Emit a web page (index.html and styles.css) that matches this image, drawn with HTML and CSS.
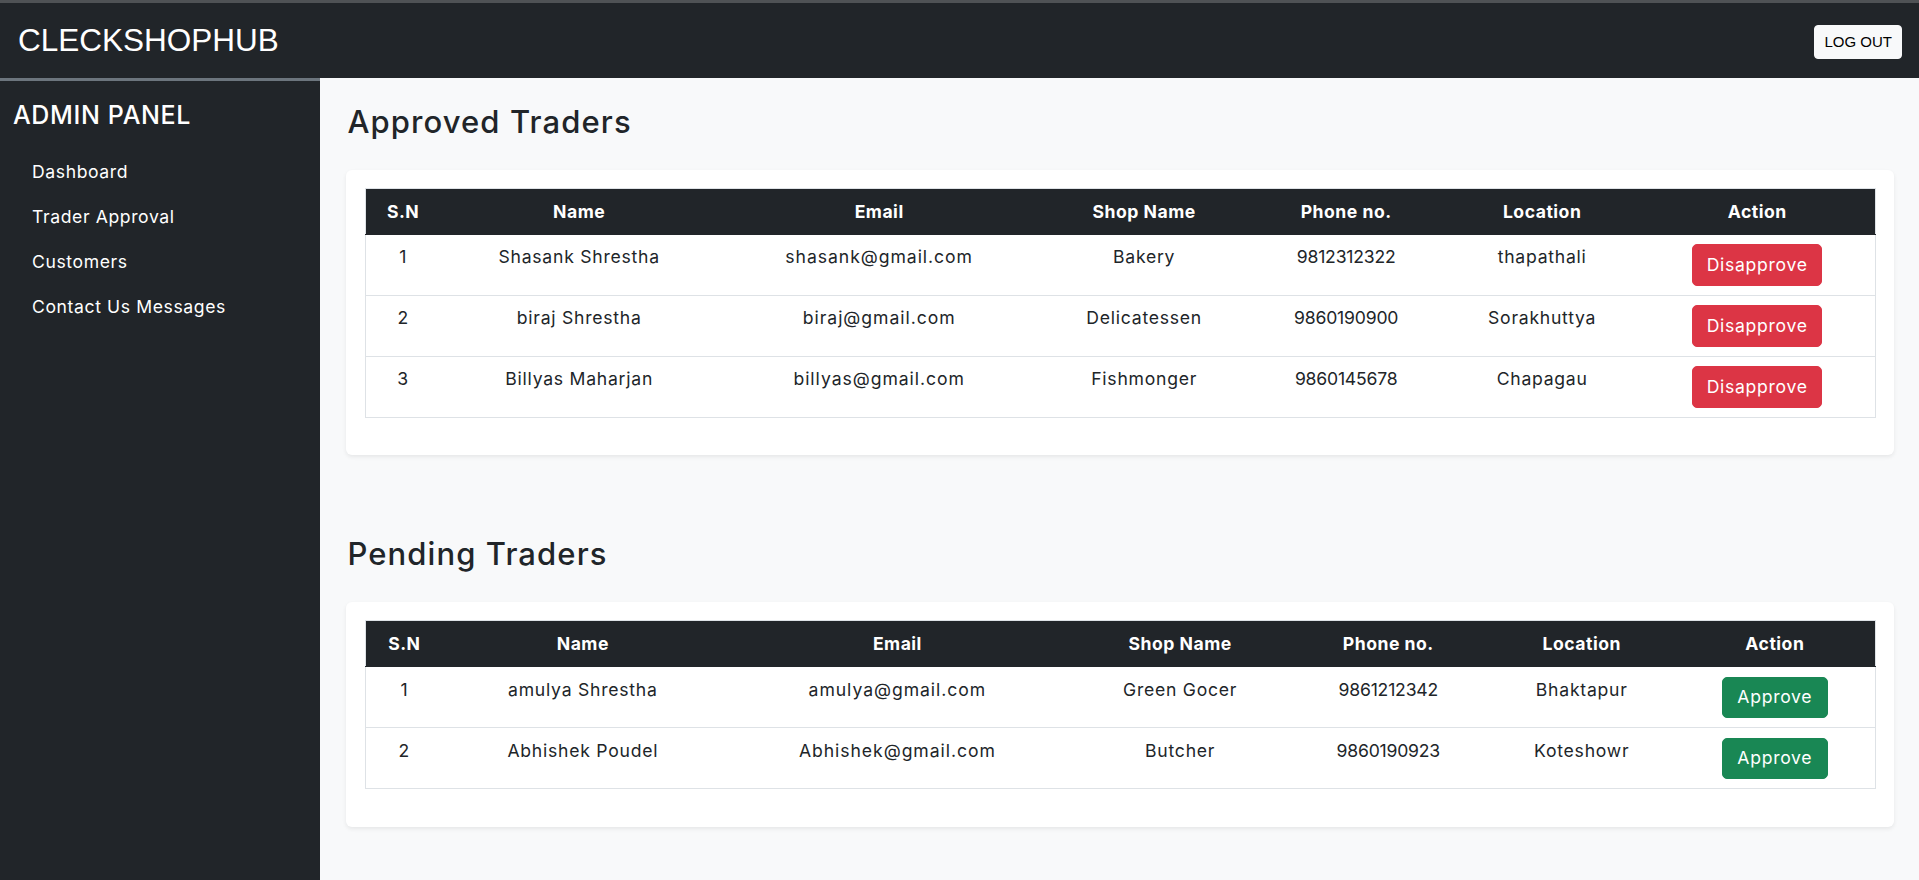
FILE: index.html
```html
<!DOCTYPE html>
<html lang="en">
<head>
<meta charset="utf-8">
<title>CleckShopHub Admin</title>
<link rel="stylesheet" href="styles.css">
</head>
<body>
<header class="topbar">
  <div class="brand">CLECKSHOPHUB</div>
  <button class="logout">LOG OUT</button>
</header>
<div class="layout">
  <aside class="sidebar">
    <h4 class="side-title">ADMIN PANEL</h4>
    <ul class="side-nav">
      <li><a href="#">Dashboard</a></li>
      <li><a href="#">Trader Approval</a></li>
      <li><a href="#">Customers</a></li>
      <li><a href="#">Contact Us Messages</a></li>
    </ul>
  </aside>
  <main class="main">
    <h2 class="section-title">Approved Traders</h2>
    <div class="card">
      <table class="tbl approved">
        <colgroup>
          <col class="c1"><col class="c2"><col class="c3"><col class="c4"><col class="c5"><col class="c6"><col class="c7">
        </colgroup>
        <thead>
          <tr><th>S.N</th><th>Name</th><th>Email</th><th>Shop Name</th><th>Phone no.</th><th>Location</th><th>Action</th></tr>
        </thead>
        <tbody>
          <tr><td>1</td><td>Shasank Shrestha</td><td class="email">shasank@gmail.com</td><td>Bakery</td><td class="phone">9812312322</td><td>thapathali</td><td><button class="btn danger">Disapprove</button></td></tr>
          <tr><td>2</td><td>biraj Shrestha</td><td class="email">biraj@gmail.com</td><td>Delicatessen</td><td class="phone">9860190900</td><td>Sorakhuttya</td><td><button class="btn danger">Disapprove</button></td></tr>
          <tr><td>3</td><td>Billyas Maharjan</td><td class="email">billyas@gmail.com</td><td>Fishmonger</td><td class="phone">9860145678</td><td>Chapagau</td><td><button class="btn danger">Disapprove</button></td></tr>
        </tbody>
      </table>
    </div>

    <h2 class="section-title pending-title">Pending Traders</h2>
    <div class="card">
      <table class="tbl pending">
        <colgroup>
          <col class="c1"><col class="c2"><col class="c3"><col class="c4"><col class="c5"><col class="c6"><col class="c7">
        </colgroup>
        <thead>
          <tr><th>S.N</th><th>Name</th><th>Email</th><th>Shop Name</th><th>Phone no.</th><th>Location</th><th>Action</th></tr>
        </thead>
        <tbody>
          <tr><td>1</td><td>amulya Shrestha</td><td class="email">amulya@gmail.com</td><td>Green Gocer</td><td class="phone">9861212342</td><td>Bhaktapur</td><td><button class="btn success">Approve</button></td></tr>
          <tr><td>2</td><td>Abhishek Poudel</td><td class="email">Abhishek@gmail.com</td><td>Butcher</td><td class="phone">9860190923</td><td>Koteshowr</td><td><button class="btn success">Approve</button></td></tr>
        </tbody>
      </table>
    </div>
  </main>
</div>
</body>
</html>
```

FILE: styles.css
```css
* { box-sizing: border-box; }
html, body { margin: 0; padding: 0; }
body {
  font-family: "Inter", "Open Sans", sans-serif;
  font-size: 17.6px;
  line-height: 1.5;
  color: #212529;
  background: #f8f9fa;
  letter-spacing: 0.6px;
  height: 880px;
  overflow: hidden;
}

.topbar {
  height: 78px;
  background: #212529;
  border-top: 3px solid #4f5255;
  display: flex;
  align-items: center;
  justify-content: space-between;
  padding: 0 17px 0 18px;
}
.brand {
  font-family: "Liberation Sans", Arial, sans-serif;
  font-size: 31.5px;
  color: #fff;
  letter-spacing: 0;
  line-height: 1.2;
  padding-top: 1px;
}
.logout {
  font-family: "Liberation Sans", Arial, sans-serif;
  font-size: 15px;
  line-height: 23.1px;
  letter-spacing: 0;
  color: #000;
  background: #f8f9fa;
  border: 1px solid #f8f9fa;
  border-radius: 4px;
  padding: 4.4px 9px;
  margin-top: 3px;
}

.layout {
  display: flex;
  height: 802px;
}
.sidebar {
  width: 320px;
  flex: 0 0 320px;
  background: #212529;
  border-top: 3px solid #6c757d;
  color: #fff;
}
.side-title {
  margin: 19px 0 0 0;
  padding-left: 13px;
  font-size: 25px;
  font-weight: 500;
  line-height: 30px;
  letter-spacing: 0.65px;
}
.side-nav {
  list-style: none;
  margin: 19.5px 0 0 0;
  padding: 0 0 0 14px;
}
.side-nav a {
  display: block;
  color: #fff;
  text-decoration: none;
  padding: 9.3px 18px;
  line-height: 26.4px;
  letter-spacing: 0.6px;
}

.main {
  flex: 1;
  padding: 0 26.4px;
}
.section-title {
  margin: 26px 0 30px 1px;
  font-size: 31px;
  font-weight: 500;
  line-height: 36px;
  letter-spacing: 1.1px;
}
.pending-title { margin-top: 81px; }

.card {
  background: #fff;
  border-radius: 6px;
  padding: 18px 18px 18px 18.3px;
  box-shadow: 0 2px 4.4px rgba(0, 0, 0, 0.075);
}

.tbl {
  width: 100%;
  border-collapse: collapse;
  border: 1px solid #dee2e6;
  margin-bottom: 19.6px;
  table-layout: fixed;
}
.tbl th, .tbl td {
  text-align: center;
  vertical-align: top;
  padding: 9.6px 4px 8.8px;
  line-height: 26.4px;
  white-space: nowrap;
}
.tbl th {
  background: #212529;
  color: #fff;
  font-weight: 700;
  letter-spacing: 0.5px;
  border-bottom: 1px solid #212529;
}
.tbl td {
  border-bottom: 1px solid #dee2e6;
  font-weight: 400;
  letter-spacing: 0.75px;
}
.tbl td.email { letter-spacing: 0.95px; }
.tbl td.phone { letter-spacing: -0.2px; }

.approved .c1 { width: 75.4px; }
.approved .c2 { width: 277.2px; }
.approved .c3 { width: 322.8px; }
.approved .c4 { width: 207.2px; }
.approved .c5 { width: 196.8px; }
.approved .c6 { width: 195.2px; }
.approved .c7 { width: 235.4px; }

.pending .c1 { width: 77.8px; }
.pending .c2 { width: 279.6px; }
.pending .c3 { width: 349.4px; }
.pending .c4 { width: 216px; }
.pending .c5 { width: 200.2px; }
.pending .c6 { width: 186.6px; }
.pending .c7 { width: 200px; }

.btn {
  font-family: inherit;
  font-size: 17.6px;
  line-height: 26.4px;
  letter-spacing: 0.7px;
  color: #fff;
  border-radius: 5px;
  padding: 6.6px 13.2px;
  cursor: pointer;
}
.btn.danger { background: #dc3545; border: 1px solid #dc3545; }
.btn.success { background: #198754; border: 1px solid #198754; padding: 6.6px 14.6px; }
```
